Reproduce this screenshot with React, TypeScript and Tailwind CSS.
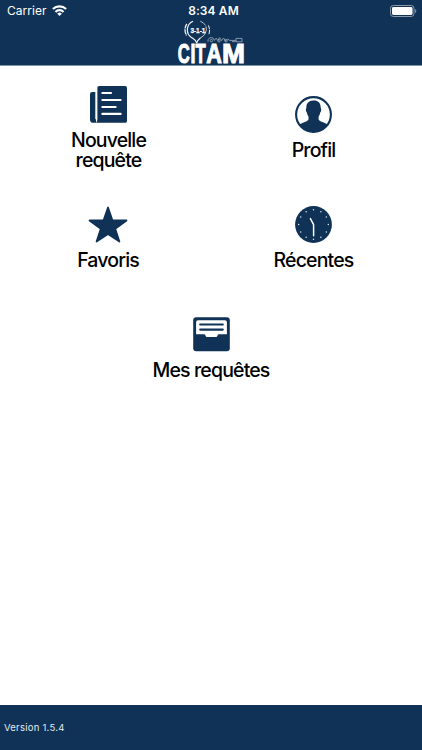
import type { ReactNode } from "react";

const NewspaperIcon = () => (
  <svg viewBox="0 0 37 37" className="h-[37px] w-[37px]" fill="#0f3256">
    <path d="M7.4 1.6A1.6 1.6 0 0 1 9 0h26.1a1.9 1.9 0 0 1 1.9 1.9v33a1.9 1.9 0 0 1-1.9 1.9H5.4C6.8 36.2 7.4 35 7.4 33z" />
    <path d="M4.8 6H2.2A2.2 2.2 0 0 0 0 8.2v25.2a3.4 3.4 0 0 0 3.4 3.4H6V6z" />
    <path d="M6 5.5v27.8" fill="none" stroke="#fff" strokeWidth="1.4" />
    <path d="M12.4 7h8.6M12.4 14h18.2M12.4 21h13.2M12.4 27.9h18.2" stroke="#fff" strokeWidth="2.2" strokeLinecap="round" />
  </svg>
);

const ProfileIcon = () => (
  <svg viewBox="0 0 37 37" className="h-[37px] w-[37px]">
    <circle cx="18.5" cy="18.5" r="17.4" fill="#fff" stroke="#0f3256" strokeWidth="2.1" />
    <path
      fill="#0f3256"
      d="M18.3 4.6c4.8-.2 7.6 2.6 7.4 7.4.9.4.5 3.6-.5 4.4-.3 1.8-.8 3-1.6 4v3.2c.5 2.1 6.5 2.7 9 5.2A17 17 0 0 1 4.7 28.8c2.5-2.5 8.3-3.1 8.8-5.2v-3.1c-.8-1-1.3-2.2-1.6-4-1-.8-1.4-4-.5-4.4-.3-4.3 2.1-7.4 6.9-7.5z"
    />
  </svg>
);

const StarIcon = () => (
  <svg viewBox="0 0 40 37" className="h-[37px] w-[40px]">
    <path
      d="M20 1.5l4.4 12.8 14.1.2-11.3 8.3 4.2 12.8L20 28 8.6 35.6l4.2-12.8L1.5 14.5l14.1-.2z"
      fill="#0f3256"
      stroke="#0f3256"
      strokeWidth="1.8"
      strokeLinejoin="round"
    />
  </svg>
);

const ticks = Array.from({ length: 12 }, (_, i) => {
  const a = (i * Math.PI) / 6;
  return { x: 18.5 + 14.8 * Math.sin(a), y: 18.5 - 14.8 * Math.cos(a) };
});

const ClockIcon = () => (
  <svg viewBox="0 0 37 37" className="h-[37px] w-[37px]">
    <circle cx="18.5" cy="18.5" r="18.4" fill="#0f3256" />
    {ticks.map((t, i) => (
      <circle key={i} cx={t.x} cy={t.y} r="0.75" fill="#dce5ed" />
    ))}
    <path d="M15.4 12.6l3.2 6v11.2" fill="none" stroke="#fff" strokeWidth="1.5" strokeLinecap="round" strokeLinejoin="round" />
  </svg>
);

const TrayIcon = () => (
  <svg viewBox="0 0 37 37" className="h-[37px] w-[37px]">
    <rect x="0.2" y="1.3" width="36.6" height="34" rx="3" fill="#0f3256" />
    <path d="M5.1 4.2h26.8a2 2 0 0 1 2 2v12h-8.4c-.9 0-.9 2.7-2.2 2.7h-9.6c-1.3 0-1.3-2.7-2.2-2.7H3.1v-12a2 2 0 0 1 2-2z" fill="#fff" />
    <path d="M7.2 8.5h22.6M7.2 13.6h22.6" stroke="#0f3256" strokeWidth="2.1" strokeLinecap="round" />
  </svg>
);

const WifiIcon = () => (
  <svg viewBox="0 0 15 11" className="-mt-px h-[11px] w-[15px]" fill="none" stroke="#fff" strokeWidth="2.2">
    <path d="M.9 4a9.4 9.4 0 0 1 13.2 0" />
    <path d="M3.5 6.9a5.6 5.6 0 0 1 8 0" />
    <path d="M5.2 8.7a3.2 3.2 0 0 1 4.6 0L7.5 11z" fill="#fff" stroke="none" />
  </svg>
);

const BatteryIcon = () => (
  <svg viewBox="0 0 27 12" className="-mt-px h-3 w-[27px]">
    <rect x="0.5" y="0.5" width="23.5" height="11" rx="2.8" fill="none" stroke="#8799ab" />
    <rect x="2" y="2" width="20.5" height="8" rx="1.4" fill="#fff" />
    <path d="M25.1 4v4c1.6-.6 1.6-3.4 0-4z" fill="#8799ab" />
  </svg>
);

// x position and width of each letter
const letters = [
  { char: "C", x: 1.8, width: 12 },
  { char: "I", x: 14.4, width: 5 },
  { char: "T", x: 19.6, width: 10.2 },
  { char: "A", x: 30.2, width: 15.6 },
  { char: "M", x: 46, width: 23 },
];

const Logo = () => (
  <svg viewBox="0 0 70 46" className="h-[46px] w-[70px] overflow-visible" fill="none">
    <g stroke="#f2f5f8">
      <path d="M17 1.2A9.3 9.3 0 0 0 15.4 17.4c2 1.4 4.6 2 5.2 5.6.8-3.4 2.6-4 4.2-5.4" strokeWidth="1.2" />
      <path d="M24.8 17.6a9.5 9.5 0 0 0 5.2-11.2" strokeWidth="0.8" />
      <path d="M24.2 1.2a10.3 10.3 0 0 1 5.4 4.3" strokeWidth="0.7" />
      <path d="M10.8 3.8a10.8 10.8 0 0 0-.2 11.6" strokeWidth="1.3" strokeDasharray="5 .6" />
      <path d="M32.4 5.4a12 12 0 0 1 .3 9.4" strokeWidth="1" strokeDasharray="4 .7" />
    </g>
    <text
      x="14.4"
      y="12.6"
      textLength="15"
      lengthAdjust="spacingAndGlyphs"
      fontSize="7"
      fontWeight="700"
      fill="#fff"
      stroke="#fff"
      strokeWidth="0.25"
      className="font-['Liberation_Sans',sans-serif]"
    >
      3-1-1
    </text>
    {/* vehicles above the name */}
    <g stroke="#9fb0c0" strokeWidth="0.8">
      <path d="M32 21.8v-2l1.6-2h3.2l1.6 2.6 1.8-2.2 1.6 2.2 1.8-2.8 2 3 2-2.6 1.8 3 2-2 2.4 1.4h6.4M60 21.8v-3.4h6v3.4H60M56 21.6h3.6" />
      <circle cx="35.4" cy="20.6" r="1.2" />
      <circle cx="43" cy="20.8" r="1.2" />
      <circle cx="50" cy="20.8" r="1.2" />
    </g>
    <g fontSize="18" fontWeight="700" fill="#fff" stroke="#fff" strokeWidth="0.7" className="font-['Liberation_Sans',sans-serif]">
      {letters.map((l) => (
        <text key={l.char} transform={`translate(${l.x} 42.6) scale(1 1.5)`} textLength={l.width} lengthAdjust="spacingAndGlyphs">
          {l.char}
        </text>
      ))}
    </g>
  </svg>
);

type TileProps = { icon: ReactNode; label: string; className?: string };

const Tile = ({ icon, label, className = "" }: TileProps) => (
  <button className={`flex h-[110px] flex-col items-center justify-center ${className}`}>
    {icon}
    <span className="mt-[7px] mb-px max-w-[100px] text-center text-[19.5px] leading-5 font-medium tracking-[-0.85px] text-black">{label}</span>
  </button>
);

export default function App() {
  return (
    <div className="flex h-screen flex-col bg-white font-['Inter',sans-serif]">
      <header className="h-[66px] border-b border-[#8195a8] bg-[#0f3256] text-white">
        <div className="grid h-5 grid-cols-[1fr_auto_1fr] items-center pt-[2px] pr-[5px] pl-[7px]">
          <div className="flex items-center gap-[5px] text-[12px] tracking-[0.05px]">
            <span>Carrier</span>
            <WifiIcon />
          </div>
          <span className="pl-[3px] text-[12px] font-semibold tracking-[0.1px]">8:34 AM</span>
          <div className="flex justify-end">
            <BatteryIcon />
          </div>
        </div>
        <div className="flex justify-center">
          <Logo />
        </div>
      </header>

      <main className="grid flex-1 grid-cols-2 content-start px-[6px] pt-[7px]">
        <Tile icon={<NewspaperIcon />} label="Nouvelle requête" />
        <Tile icon={<ProfileIcon />} label="Profil" />
        <Tile icon={<StarIcon />} label="Favoris" className="pr-px" />
        <Tile icon={<ClockIcon />} label="Récentes" />
        <Tile icon={<TrayIcon />} label="Mes requêtes" className="col-span-2 [&>span]:max-w-none" />
      </main>

      <footer className="flex h-[45px] items-center bg-[#0f3256] pt-px pl-1 text-[9.5px] tracking-[0.25px] text-[#e6ecf1]">Version 1.5.4</footer>
    </div>
  );
}
